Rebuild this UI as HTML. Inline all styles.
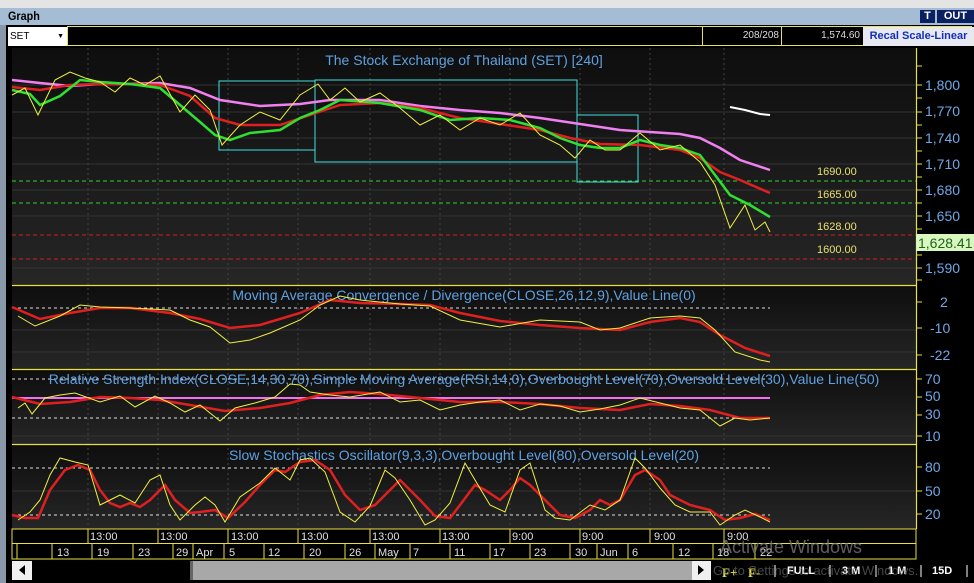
<!DOCTYPE html>
<html><head><meta charset="utf-8"><style>
*{margin:0;padding:0}body{width:974px;height:583px;overflow:hidden;background:#d4d0c8;font-family:"Liberation Sans",Arial,sans-serif;position:relative}
.a{position:absolute}
</style></head><body>
<div class="a" style="left:0;top:0;width:974px;height:8px;background:#e4e4e4;border-bottom:1px solid #999"></div>
<div class="a" style="left:0;top:8px;width:974px;height:17px;background:#a4bcd4"></div>
<div class="a" style="left:8px;top:9px;font-size:12px;font-weight:bold;color:#000;transform:scaleX(.9);transform-origin:left">Graph</div>
<div class="a" style="left:920px;top:10px;width:15px;height:13px;background:#0a2060;color:#fff;font-size:11px;font-weight:bold;text-align:center">T</div>
<div class="a" style="left:937px;top:10px;width:37px;height:13px;background:#0a2060;color:#fff;font-size:11px;font-weight:bold;text-align:center">OUT</div>
<div class="a" style="left:0;top:25px;width:6px;height:558px;background:#8898a8"></div>
<div class="a" style="left:6px;top:25px;width:968px;height:558px;background:#000"></div>
<div class="a" style="left:8px;top:27px;width:58px;height:19px;background:#fff;font-size:10px;line-height:19px;padding-left:2px">SET<span style="position:absolute;right:4px;font-size:7px">▼</span></div>
<div class="a" style="left:67px;top:26px;width:905px;height:20px;border:1px solid #e8e060;box-sizing:border-box"></div>
<div class="a" style="left:702px;top:26px;width:80px;height:20px;border-left:1px solid #e8e060;border-right:1px solid #e8e060;color:#ddd;font-size:10px;text-align:right;line-height:20px;padding-right:2px;box-sizing:border-box">208/208</div>
<div class="a" style="left:782px;top:26px;width:80px;height:20px;color:#ddd;font-size:10px;text-align:right;line-height:20px;padding-right:2px;box-sizing:border-box">1,574.60</div>
<div class="a" style="left:863px;top:27px;width:111px;height:19px;background:#e8e8f0;color:#1030c0;font-size:11px;font-weight:bold;line-height:19px;text-align:center">Recal Scale-Linear</div>
<svg class="a" style="left:0;top:47px" width="974" height="536" viewBox="0 47 974 536" font-family="Liberation Sans,Arial,sans-serif">
<defs><linearGradient id="g" x1="0" y1="0" x2="0" y2="1"><stop offset="0" stop-color="#0e0e0e"/><stop offset="1" stop-color="#262626"/></linearGradient></defs>
<rect x="12" y="48" width="904" height="237" fill="url(#g)"/>
<rect x="12" y="286" width="904" height="83" fill="url(#g)"/>
<rect x="12" y="370" width="904" height="74" fill="url(#g)"/>
<rect x="12" y="445" width="904" height="84" fill="url(#g)"/>
<g stroke="#333" stroke-width="1">
<line x1="12" x2="916" y1="85" y2="85"/><line x1="12" x2="916" y1="112" y2="112"/><line x1="12" x2="916" y1="138" y2="138"/><line x1="12" x2="916" y1="164" y2="164"/><line x1="12" x2="916" y1="190" y2="190"/><line x1="12" x2="916" y1="216" y2="216"/><line x1="12" x2="916" y1="268" y2="268"/>
<line x1="12" x2="916" y1="330" y2="330"/><line x1="12" x2="916" y1="352" y2="352"/><line x1="12" x2="916" y1="436" y2="436"/><line x1="12" x2="916" y1="491" y2="491"/>
</g>
<g stroke="#444" stroke-dasharray="2,3"><line x1="88" x2="88" y1="48" y2="529"/><line x1="158" x2="158" y1="48" y2="529"/><line x1="228" x2="228" y1="48" y2="529"/><line x1="298" x2="298" y1="48" y2="529"/><line x1="370" x2="370" y1="48" y2="529"/><line x1="440" x2="440" y1="48" y2="529"/><line x1="510" x2="510" y1="48" y2="529"/><line x1="580" x2="580" y1="48" y2="529"/><line x1="650" x2="650" y1="48" y2="529"/><line x1="724" x2="724" y1="48" y2="529"/></g>
<g stroke="#e8e040" stroke-width="1.2"><line x1="12" x2="916" y1="285.5" y2="285.5"/><line x1="12" x2="916" y1="369.5" y2="369.5"/><line x1="12" x2="916" y1="444.5" y2="444.5"/><line x1="916.5" x2="916.5" y1="48" y2="529"/></g>
<text x="464" y="65" fill="#60a0e0" font-size="14" text-anchor="middle">The Stock Exchange of Thailand (SET) [240]</text>
<g fill="#70a8e8" font-size="14"><text x="925" y="90">1,800</text><text x="925" y="116">1,770</text><text x="925" y="143">1,740</text><text x="925" y="169">1,710</text><text x="925" y="195">1,680</text><text x="925" y="221">1,650</text><text x="925" y="273">1,590</text>
<text x="940" y="307">2</text><text x="930" y="333">-10</text><text x="930" y="360">-22</text>
<text x="925" y="384">70</text><text x="925" y="401">50</text><text x="925" y="419">30</text><text x="925" y="441">10</text>
<text x="925" y="472">80</text><text x="925" y="496">50</text><text x="925" y="519">20</text></g>
<g stroke="#e8e040"><path d="M917 66h5M917 85h5M917 98h5M917 112h5M917 125h5M917 138h5M917 151h5M917 164h5M917 177h5M917 190h5M917 203h5M917 216h5M917 229h5M917 255h5M917 268h5M917 280h5M917 302h5M917 328h5M917 355h5M917 379h5M917 397h5M917 415h5M917 436h5M917 467h5M917 491h5M917 514h5"/></g>
<rect x="916" y="234" width="58" height="17" fill="#d8f8c0"/><text x="918" y="248" fill="#206020" font-size="14">1,628.41</text>
<g stroke-dasharray="4,3"><line x1="12" x2="916" y1="181" y2="181" stroke="#30d030"/><line x1="12" x2="916" y1="203" y2="203" stroke="#30d030"/><line x1="12" x2="916" y1="235" y2="235" stroke="#d02020"/><line x1="12" x2="916" y1="259" y2="259" stroke="#d02020"/></g>
<g fill="#e8e070" font-size="11"><text x="817" y="175">1690.00</text><text x="817" y="198">1665.00</text><text x="817" y="230">1628.00</text><text x="817" y="253">1600.00</text></g>
<path d="M730 107l15 3 15 4 10 1" stroke="#fff" stroke-width="2" fill="none"/>
<g fill="none" stroke="#40e0e0"><rect x="219" y="81" width="96" height="69"/><rect x="315" y="80" width="262" height="82"/><rect x="577" y="115" width="61" height="67"/></g>
<path d="M12 80 40 83 70 86 100 84 130 84 160 83 190 88 220 100 260 106 300 104 330 100 380 100 420 106 460 110 500 113 540 118 580 124 620 130 650 132 680 134 700 138 720 148 740 160 770 170" stroke="#f080f0" stroke-width="2.5" fill="none"/>
<path d="M12 87 40 90 70 85 100 84 130 84 160 85 190 96 215 118 240 125 280 125 310 115 340 105 380 103 420 108 460 118 500 124 540 130 570 138 600 144 640 145 680 150 700 158 720 172 740 180 770 193" stroke="#e02020" stroke-width="2.5" fill="none"/>
<path d="M12 90 30 94 40 105 60 96 80 80 100 82 130 84 160 88 180 105 200 122 215 135 230 140 250 133 280 130 300 118 320 110 340 100 380 103 420 110 450 120 480 118 510 120 540 128 560 138 580 145 600 148 620 148 640 140 660 145 680 148 700 155 715 175 730 195 750 205 770 217" stroke="#30e030" stroke-width="2.5" fill="none"/>
<path d="M12 95 25 88 38 115 55 80 70 72 85 78 100 82 115 92 130 78 145 85 160 76 180 112 195 95 210 110 222 145 240 125 260 112 280 120 300 95 318 84 330 100 345 88 360 102 380 93 400 108 420 125 440 115 460 130 480 118 500 125 520 113 540 135 560 145 575 158 590 140 605 150 620 150 640 133 660 150 680 145 700 162 715 185 730 228 745 205 755 230 765 222 770 232" stroke="#f0f040" stroke-width="1" fill="none"/>
<text x="464" y="300" fill="#60a0e0" font-size="14" text-anchor="middle">Moving Average Convergence / Divergence(CLOSE,26,12,9),Value Line(0)</text>
<line x1="12" x2="770" y1="308" y2="308" stroke="#ddd" stroke-dasharray="3,3"/>
<path d="M12 307 40 319 70 313 100 308 130 308 170 313 200 319 230 328 260 325 300 313 330 300 360 303 400 304 430 305 460 313 500 321 540 325 580 328 620 330 650 322 680 318 700 322 720 335 745 348 770 356" stroke="#e02020" stroke-width="2.5" fill="none"/>
<path d="M18 316 35 326 60 316 80 305 100 307 130 308 170 310 190 320 210 327 230 343 250 340 270 333 300 320 320 305 340 296 360 300 400 304 430 306 460 320 500 327 540 320 580 322 600 330 620 328 650 318 680 316 700 318 715 330 735 352 760 360 770 362" stroke="#f0f040" stroke-width="1" fill="none"/>
<line x1="12" x2="770" y1="379" y2="379" stroke="#ddd" stroke-dasharray="3,3"/>
<line x1="12" x2="770" y1="418" y2="418" stroke="#ddd" stroke-dasharray="3,3"/>
<line x1="12" x2="770" y1="398" y2="398" stroke="#f070f0" stroke-width="2"/>
<text x="464" y="384" fill="#60a0e0" font-size="14" text-anchor="middle">Relative Strength Index(CLOSE,14,30,70),Simple Moving Average(RSI,14,0),Overbought Level(70),Oversold Level(30),Value Line(50)</text>
<path d="M12 397 40 404 70 402 100 397 130 398 160 400 190 405 225 411 260 408 290 403 320 395 350 392 380 394 420 398 460 402 500 402 540 404 580 408 620 410 650 404 680 406 710 410 740 418 770 418" stroke="#e02020" stroke-width="2.5" fill="none"/>
<path d="M18 408 25 403 32 414 45 398 60 395 75 393 100 402 120 396 135 407 155 396 170 403 185 412 200 405 220 421 235 408 255 403 275 397 290 384 300 385 310 392 330 395 350 397 380 392 400 402 420 400 440 410 460 405 480 402 500 400 520 410 540 404 560 406 580 412 600 409 620 405 640 398 660 403 680 408 700 410 720 426 735 418 750 420 770 418" stroke="#f0f040" stroke-width="1" fill="none"/>
<text x="464" y="460" fill="#60a0e0" font-size="14" text-anchor="middle">Slow Stochastics Oscillator(9,3,3),Overbought Level(80),Oversold Level(20)</text>
<line x1="12" x2="770" y1="468" y2="468" stroke="#ddd" stroke-dasharray="3,3"/>
<line x1="12" x2="770" y1="515" y2="515" stroke="#ddd" stroke-dasharray="3,3"/>
<path d="M12 515 25 518 38 518 50 490 65 470 78 465 90 470 100 490 110 503 120 507 130 503 140 507 150 500 165 485 175 500 190 513 200 512 215 510 228 518 245 502 260 485 275 470 285 472 300 462 315 460 330 470 345 495 360 510 375 505 390 490 400 480 410 490 420 500 435 516 450 518 460 505 475 485 485 490 500 500 510 490 520 478 530 485 545 500 560 515 575 518 590 510 600 500 610 505 620 500 635 475 645 470 660 480 670 495 690 505 710 510 725 520 740 518 755 514 770 520" stroke="#e02020" stroke-width="2.5" fill="none"/>
<path d="M18 520 30 512 40 500 50 475 60 458 75 462 88 465 100 505 110 500 120 495 135 503 150 480 160 475 170 505 180 520 195 505 205 497 215 505 225 522 240 497 260 483 275 468 290 480 300 460 310 458 325 472 340 512 355 522 370 506 385 470 395 478 410 500 425 525 435 520 450 503 465 463 475 480 490 505 505 512 520 470 530 463 545 510 555 518 570 520 590 505 605 510 620 500 635 458 645 468 660 488 675 505 690 512 710 512 720 525 735 515 745 510 760 517 770 522" stroke="#f0f040" stroke-width="1" fill="none"/>
<rect x="12" y="529" width="904" height="30" fill="#000" stroke="#e8e040"/>
<line x1="12" x2="916" y1="543.5" y2="543.5" stroke="#e8e040"/>
<g stroke="#e8e040"><path d="M88 529v14M158 529v14M228 529v14M298 529v14M370 529v14M440 529v14M510 529v14M580 529v14M650 529v14M724 529v14"/>
<path d="M17 544v15M52 544v15M92 544v15M133 544v15M173 544v15M193 544v15M224 544v15M264 544v15M304 544v15M345 544v15M375 544v15M410 544v15M450 544v15M490 544v15M530 544v15M570 544v15M597 544v15M628 544v15M673 544v15M713 544v15M755 544v15"/></g>
<g fill="#e0e0e0" font-size="11"><text x="90" y="540">13:00</text><text x="160" y="540">13:00</text><text x="231" y="540">13:00</text><text x="301" y="540">13:00</text><text x="372" y="540">13:00</text><text x="442" y="540">13:00</text><text x="512" y="540">9:00</text><text x="582" y="540">9:00</text><text x="654" y="540">9:00</text><text x="727" y="540">9:00</text>
<text x="57" y="556">13</text><text x="97" y="556">19</text><text x="138" y="556">23</text><text x="176" y="556">29</text><text x="196" y="556">Apr</text><text x="229" y="556">5</text><text x="268" y="556">12</text><text x="309" y="556">20</text><text x="349" y="556">26</text><text x="378" y="556">May</text><text x="413" y="556">7</text><text x="454" y="556">11</text><text x="493" y="556">17</text><text x="534" y="556">23</text><text x="575" y="556">30</text><text x="600" y="556">Jun</text><text x="632" y="556">6</text><text x="678" y="556">12</text><text x="717" y="556">18</text><text x="760" y="556">22</text></g>
<rect x="12" y="561" width="20" height="19" fill="#f0f0f0"/><path d="M25 565l-6 5 6 5z" fill="#000"/>
<rect x="192" y="561" width="500" height="19" fill="#a8a8a8"/><rect x="190" y="561" width="3" height="19" fill="#666"/>
<rect x="692" y="561" width="19" height="19" fill="#f0f0f0"/><path d="M698 565l6 5-6 5z" fill="#000"/>
<g font-size="13" font-weight="bold" fill="#e8e040" font-family="Liberation Serif,serif"><text x="722" y="577">F+</text><text x="748" y="577">F-</text></g>
<g font-size="11" font-weight="bold" fill="#fff"><text x="787" y="574">FULL</text><text x="842" y="574">3 M</text><text x="888" y="574">1 M</text><text x="932" y="574">15D</text></g>
<g stroke="#fff"><path d="M775 565v12M830 565v12M876 565v12M921 565v12M967 565v12"/></g>
<text x="720" y="553" fill="#777" font-size="18" opacity=".8">Activate Windows</text>
<text x="713" y="575" fill="#777" font-size="13" opacity=".6">Go to Settings to activate Windows.</text>
</svg>
</body></html>
